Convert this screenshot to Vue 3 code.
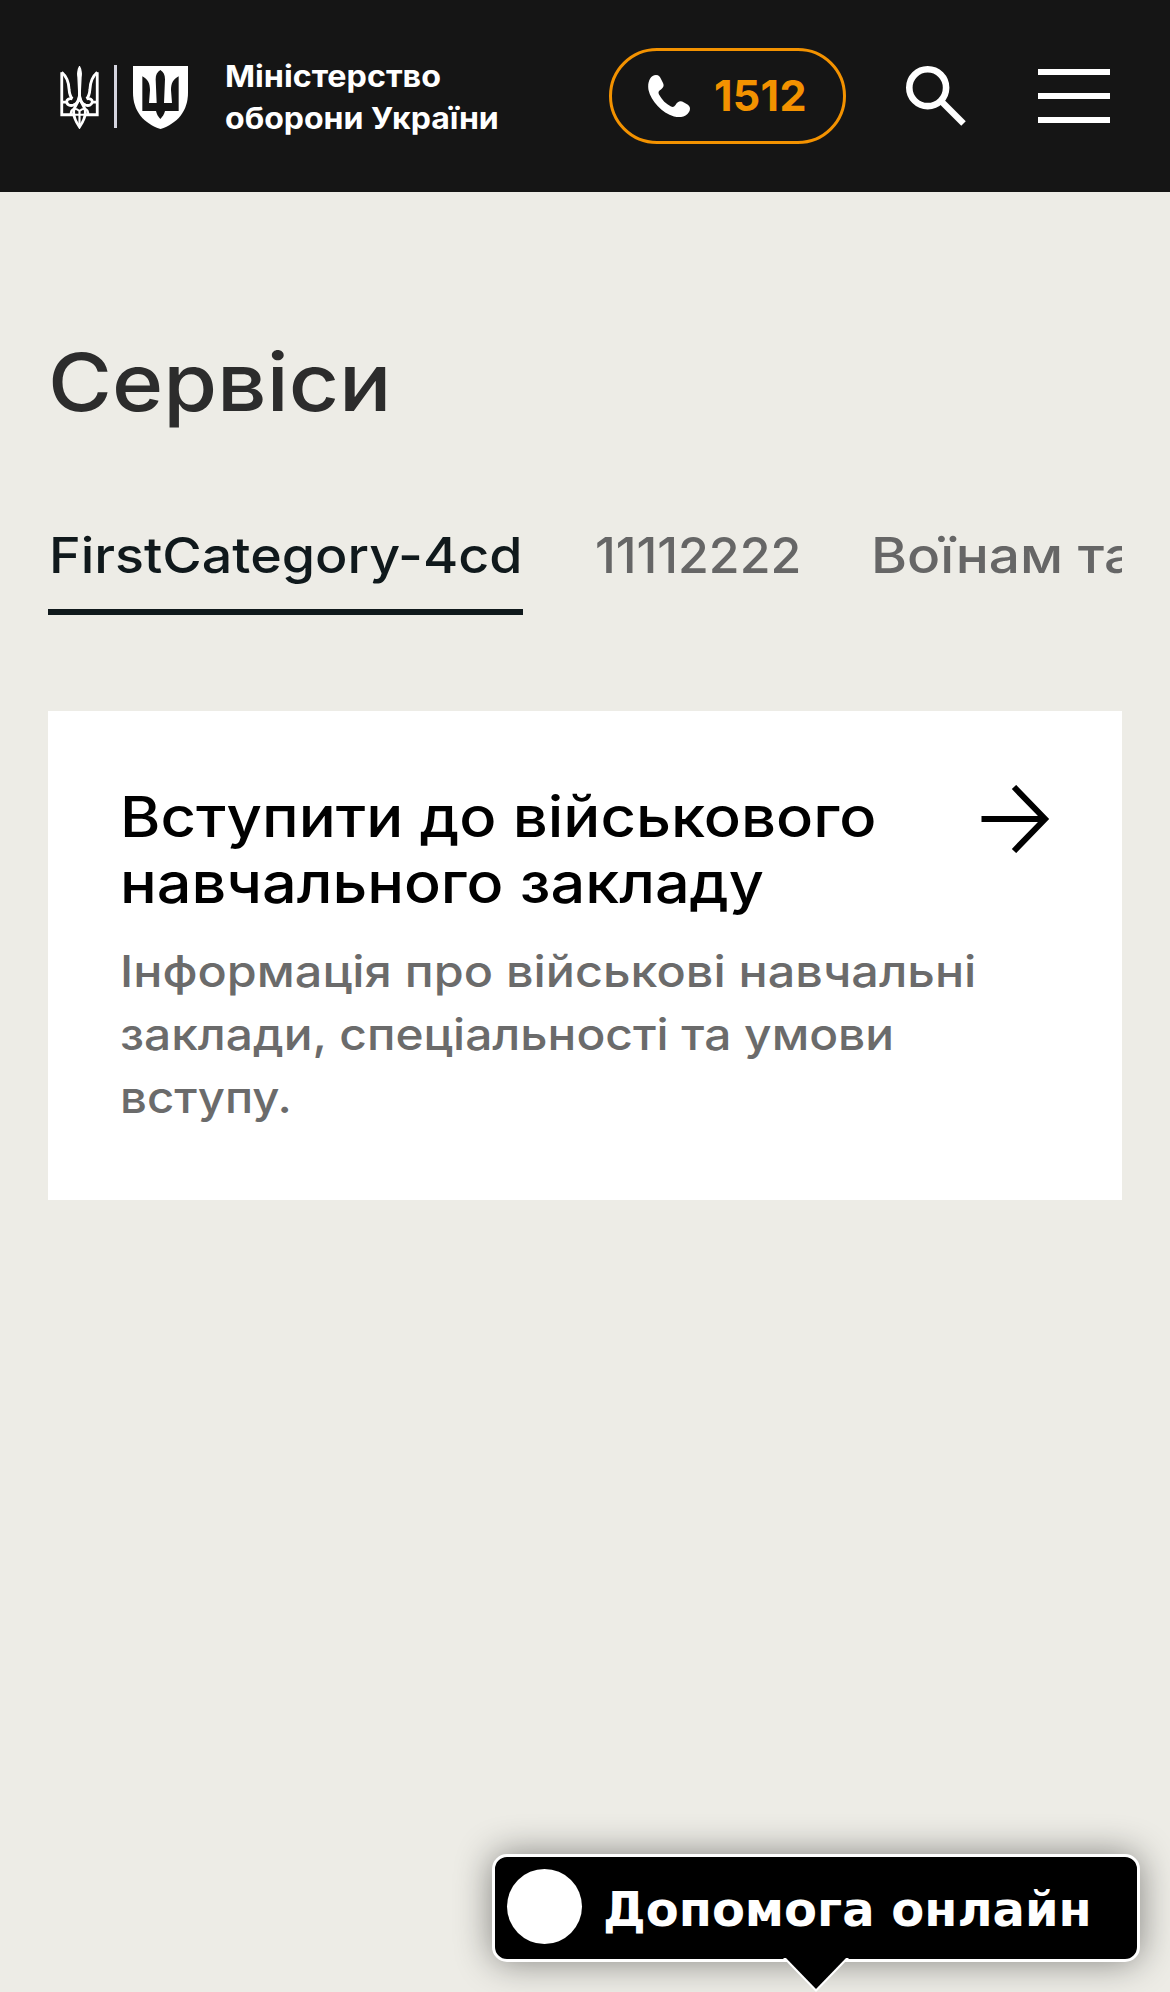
<script setup>
const ministry = [
  { text: 'Міністерство', stretch: 1.076 },
  { text: 'оборони України', stretch: 1.067 },
]
const tabs = [
  { text: 'FirstCategory-4cd', stretch: 1.076, width: 475, active: true },
  { text: '11112222', stretch: 1, width: 204 },
  { text: 'Воїнам та', stretch: 1.1, width: 270 },
]
const cardTitle = [
  { text: 'Вступити до військового', stretch: 1.1 },
  { text: 'навчального закладу', stretch: 1.091 },
]
const cardText = [
  { text: 'Інформація про військові навчальні', stretch: 1.103 },
  { text: 'заклади, спеціальності та умови', stretch: 1.088 },
  { text: 'вступу.', stretch: 1.075 },
]
const wide = (l) => ({ transform: `scaleX(${l.stretch})` })
</script>

<template>
  <div class="page">
    <header class="header">
      <a class="brand">
        <svg class="trident" viewBox="30 18 117 190" fill="none" stroke="#fff" stroke-width="8.500">
          <path d="M35 37V165H70M142 37V165H107" />
          <path d="M35 37C50 50 56 66 57 88C58 102 61 111 67 117M142 37C127 50 121 66 120 88C119 102 116 111 110 117" />
          <path d="M67 117C56 115 50 119 50 126C50 135 60 139 70 136C82 132 87 122 88.500 106C90 122 95 132 107 136C117 139 127 135 127 126C127 119 121 115 110 117" />
          <path d="M35 127H50M127 127H142" />
          <path d="M88.500 110C86 130 73 138 71 153C69 174 80 190 88.500 202C97 190 108 174 106 153C104 138 91 130 88.500 110Z" />
          <path d="M62 165C62 145 76 142 88.500 154C101 142 115 145 115 165M71 165H106M88.500 154V202" stroke-width="6.500" />
          <path d="M88.500 20C83 28 82 38 84 52L86 94V118H91V94L93 52C95 38 94 28 88.500 20Z" fill="#fff" stroke-width="4" />
        </svg>
        <span class="divider"></span>
        <svg class="shield" viewBox="279 48 165 189">
          <path fill="#fff" d="M279 48H444V128C444 183 412 220 361.500 237C311 220 279 183 279 128Z" />
          <path fill="#151515" d="M307 79C324 88 330 101 330 120L327 159H350L347 88C347 75 351 66 361 60C371 66 375 75 375 88L372 159H396L393 120C393 101 399 88 416 79V183H375C373 193 367 201 361 207C355 201 350 193 348 183H307Z" />
        </svg>
        <span class="ministry">
          <span v-for="l in ministry" :key="l.text" class="line" :style="wide(l)">{{ l.text }}</span>
        </span>
      </a>
      <a class="phone">
        <svg width="42" height="42" viewBox="0 0 42 42" fill="#fff">
          <path d="M8 0C11 0 12 2 13 4L15 8C16.500 11 15 13 13 14.500C10.500 16 10 17 11 19.500C14 25 18 29 23 31.500C25 32.500 26 32 27.500 30C30 26 32.500 25.500 36 27.500L39.500 29.500C42.500 31.500 42.500 34.500 41 37C38 42 32 43 26 41.500C14 38 3 26 .5 15C-.8 8 2 0 8 0Z" />
        </svg>
        <span>1512</span>
      </a>
      <svg class="search" width="60" height="60" viewBox="0 0 60 60" fill="none" stroke="#fff">
        <circle cx="21.700" cy="21.700" r="18.400" stroke-width="6.600" />
        <path d="M34.500 34.500L57.500 57.500" stroke-width="6.400" />
      </svg>
      <div class="burger"><i></i><i></i><i></i></div>
    </header>

    <main>
      <h1>Сервіси</h1>
      <nav class="tabs">
        <a v-for="t in tabs" :key="t.text" :class="{ active: t.active }" :style="{ width: t.width + 'px' }">
          <span class="line" :style="wide(t)">{{ t.text }}</span>
        </a>
      </nav>
      <article class="card">
        <div class="row">
          <h2>
            <span v-for="l in cardTitle" :key="l.text" class="line" :style="wide(l)">{{ l.text }}</span>
          </h2>
          <svg width="69" height="68" viewBox="0 0 69 68" fill="none" stroke="#000" stroke-width="6">
            <path d="M0.500 34H64M33 2L64 34L33 66" />
          </svg>
        </div>
        <p>
          <span v-for="l in cardText" :key="l.text" class="line" :style="wide(l)">{{ l.text }}</span>
        </p>
      </article>
    </main>

    <aside class="chat">
      <span class="dot"></span>
      <span class="label">Допомога онлайн</span>
      <svg class="tail" width="68" height="34" viewBox="0 0 68 34">
        <path d="M1 0H67L34 34Z" fill="#fff" />
        <path d="M4 0H64L34 31Z" fill="#000" />
      </svg>
    </aside>
  </div>
</template>

<style>
body { background: #edece6; }
</style>

<style scoped>
.page {
  position: relative;
  height: 1992px;
  overflow: hidden;
  background: #edece6;
  font-family: Inter, "Liberation Sans", sans-serif;
  font-weight: 500;
}
.header {
  display: flex;
  align-items: center;
  box-sizing: border-box;
  height: 192px;
  padding: 0 60px;
  background: #151515;
}
.brand { display: flex; align-items: center; width: 549px; }
.trident { width: 39px; height: 63px; margin-top: 3px; }
.divider { width: 3px; height: 63px; margin-left: 15px; background: #d5d5df; }
.shield { width: 55px; height: 63px; margin: 3px 0 0 16px; }
.ministry {
  margin: 2px 0 0 37px;
  color: #fff;
  font-size: 30px;
  font-weight: 650;
  line-height: 42px;
}
.line { display: block; white-space: nowrap; transform-origin: left; }
.phone {
  display: flex;
  align-items: center;
  box-sizing: border-box;
  width: 237px;
  height: 96px;
  padding-left: 36px;
  border: 3px solid #f39200;
  border-radius: 48px;
  color: #f39200;
  font-size: 43px;
  font-weight: 700;
}
.phone span { margin: -2px 0 0 24px; letter-spacing: .3px; }
.search { margin: -1px 0 0 60px; }
.burger { display: flex; flex-direction: column; gap: 18px; width: 72px; margin-left: 72px; }
.burger i { height: 6px; background: #fff; }
main { padding: 141px 48px 0; }
h1 {
  margin: 0;
  color: #2c2c2c;
  font-size: 80px;
  font-weight: 500;
  line-height: 98px;
  transform: scaleX(1.09);
  transform-origin: left;
}
.tabs { display: flex; gap: 72px; margin-top: 94px; overflow: hidden; }
.tabs a {
  flex: none;
  height: 84px;
  border-bottom: 6px solid transparent;
  color: #666;
  font-size: 50px;
  line-height: 60px;
}
.tabs a.active { border-color: #10191c; color: #10191c; }
.tabs a.active .line { margin-left: 1px; }
.card { margin-top: 96px; padding: 72px; background: #fff; }
.row { display: flex; justify-content: space-between; height: 132px; }
h2 { margin: 1px 0 0; font-size: 56px; font-weight: 480; line-height: 66px; }
.row svg { flex: none; margin-top: 2px; }
p { margin: 25px 0 -1px; color: #6b6b6b; font-size: 44px; line-height: 63px; }
.chat {
  position: absolute;
  left: 492px;
  top: 1854px;
  display: flex;
  align-items: center;
  box-sizing: border-box;
  width: 648px;
  height: 108px;
  padding-left: 12px;
  border: 3px solid #fff;
  border-radius: 15px;
  background: #000;
  box-shadow: 0 0 36px rgba(0, 0, 0, .45);
  color: #fff;
}
.dot { width: 75px; height: 75px; margin-top: -3px; border-radius: 50%; background: #fff; }
.label { margin: 2px 0 0 21px; font: bold 48px/58px "DejaVu Sans", sans-serif; white-space: nowrap; }
.tail { position: absolute; left: 287px; top: 101px; }
</style>
